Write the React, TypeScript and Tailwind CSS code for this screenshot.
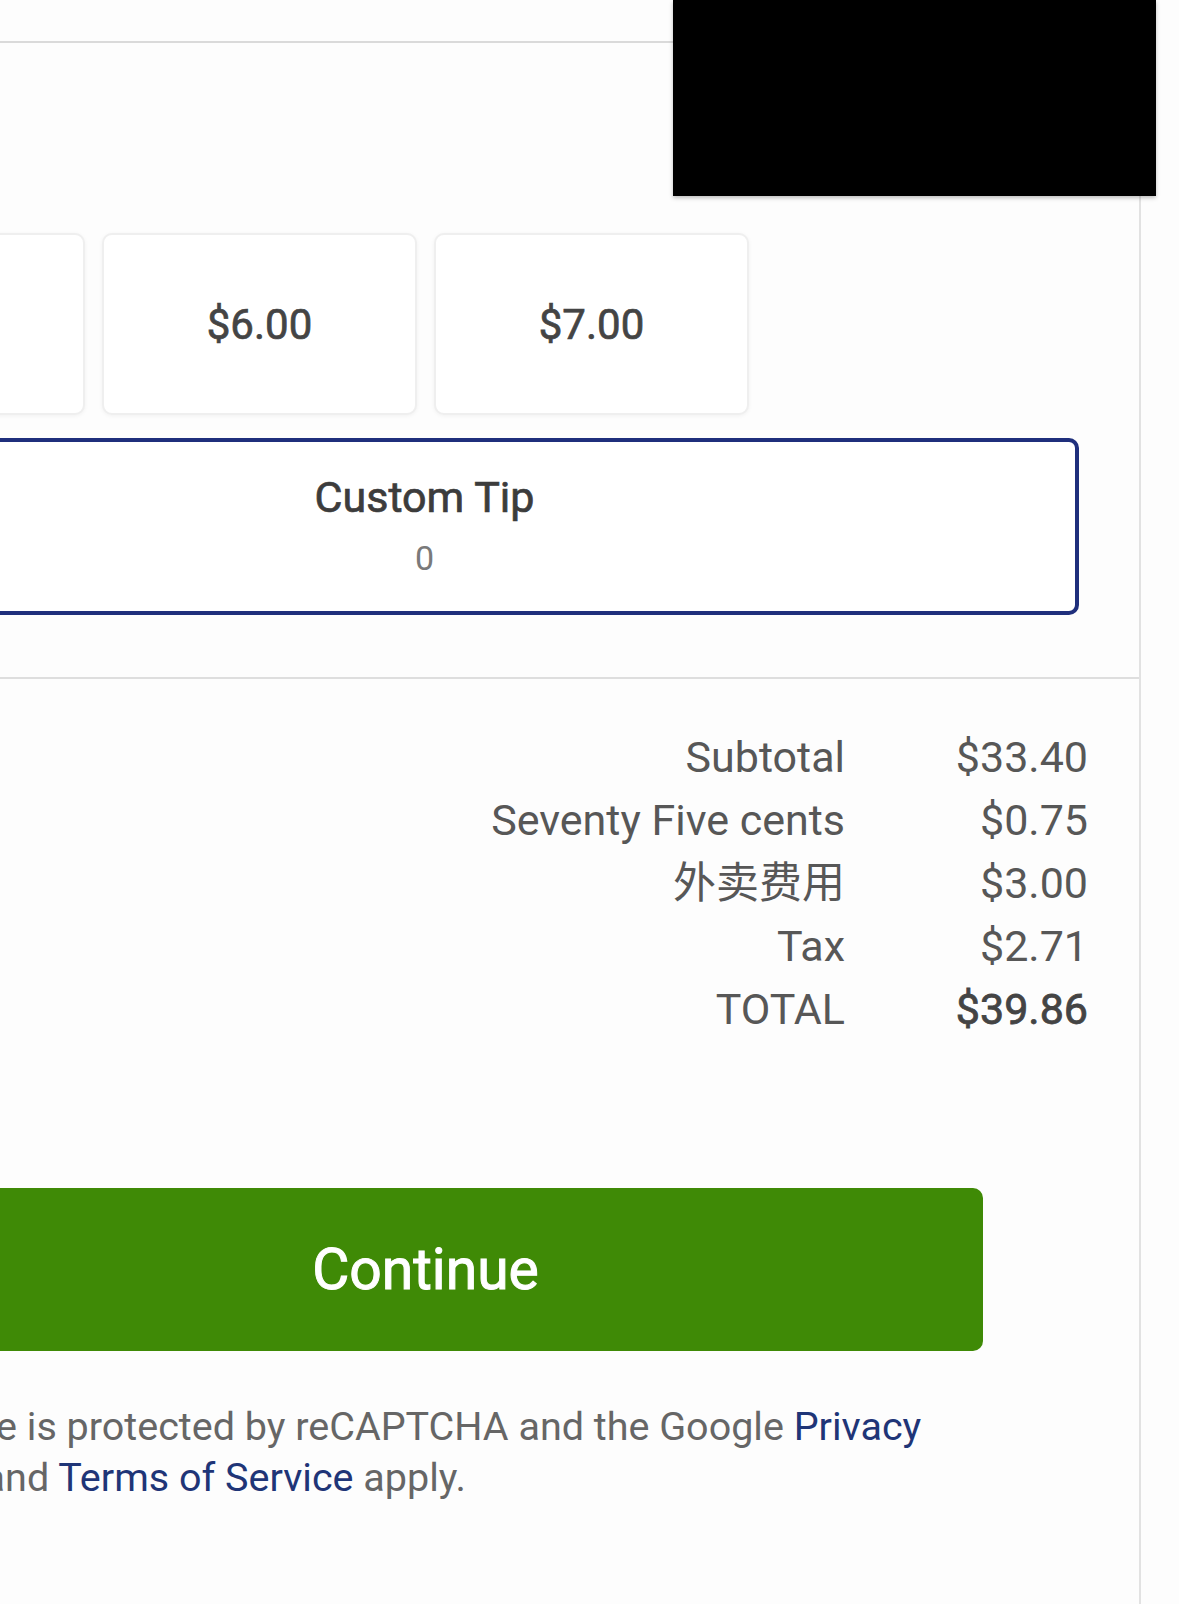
import React from "react"

const tips = ["$5.00", "$6.00", "$7.00"]

const lines = [
  { label: "Subtotal", value: "$33.40" },
  { label: "Seventy Five cents", value: "$0.75" },
  { label: "外卖费用", value: "$3.00" },
  { label: "Tax", value: "$2.71" },
  { label: "TOTAL", value: "$39.86", strong: true },
]

export default function App() {
  return (
    <div
      className="relative w-[1179px] h-[1604px] overflow-hidden bg-[#fdfdfd]"
      style={{ fontFamily: 'Roboto, "Noto Sans CJK SC", sans-serif' }}
    >
      <div className="w-[1141px] h-full border-r-2 border-[#e2e2e2] flex flex-col">
        {/* header divider */}
        <div className="h-[43px] border-b-2 border-[#dadada] shrink-0" />

        <div className="ml-[-230px] w-[1369px] flex flex-col">
          {/* Tip options */}
          <div className="pt-[190px] pr-[60px]">
            <div className="flex gap-[17px]">
              {tips.map((tip) => (
                <div
                  key={tip}
                  className="w-[315px] h-[182px] rounded-[10px] border-2 border-[#efefef] bg-white shadow-[0_1px_4px_rgba(0,0,0,0.05)] flex items-center justify-center text-[42px] text-[#444444] [-webkit-text-stroke:0.7px_#444444]"
                >
                  {tip}
                </div>
              ))}
            </div>

            <div className="mt-[23px] h-[177px] rounded-[10px] border-4 border-[#1f2f7c] bg-white flex flex-col items-center pt-[30px]">
              <div className="text-[43px] leading-[50px] text-[#3c3c3c] [-webkit-text-stroke:0.7px_#3c3c3c]">
                Custom Tip
              </div>
              <div className="mt-[16px] text-[34px] leading-[40px] text-[#7a7a7a]">0</div>
            </div>
          </div>

          <div className="mt-[62px] h-[2px] bg-[#dedede]" />

          {/* Totals */}
          <div className="pt-[47px] pr-[51px] flex flex-col items-end">
            {lines.map((line) => (
              <div key={line.label} className="flex h-[63px] items-center text-[43px] text-[#575757]">
                <span className="text-right">{line.label}</span>
                <span
                  className={
                    line.strong
                      ? "w-[243px] text-right text-[#444444] [-webkit-text-stroke:0.8px_#444444]"
                      : "w-[243px] text-right"
                  }
                >
                  {line.value}
                </span>
              </div>
            ))}
          </div>

          {/* Continue */}
          <div className="mt-[147px] ml-[98px] w-[1115px] h-[163px] rounded-[10px] bg-[#3f8a06] flex items-center justify-center">
            <span className="text-[57px] text-white [-webkit-text-stroke:1px_#ffffff]">Continue</span>
          </div>

          <p className="mt-[50px] ml-[98px] w-[1115px] text-[39.5px] leading-[51px] text-[#666666]">
            This site is protected by reCAPTCHA and the Google{" "}
            <a className="text-[#1f3577]">Privacy Policy</a> and{" "}
            <a className="text-[#1f3577]">Terms of Service</a> apply.
          </p>
        </div>
      </div>

      {/* redaction block */}
      <div className="absolute left-[673px] top-0 w-[483px] h-[196px] bg-black shadow-[0_2px_4px_rgba(0,0,0,0.25)]" />
    </div>
  )
}
